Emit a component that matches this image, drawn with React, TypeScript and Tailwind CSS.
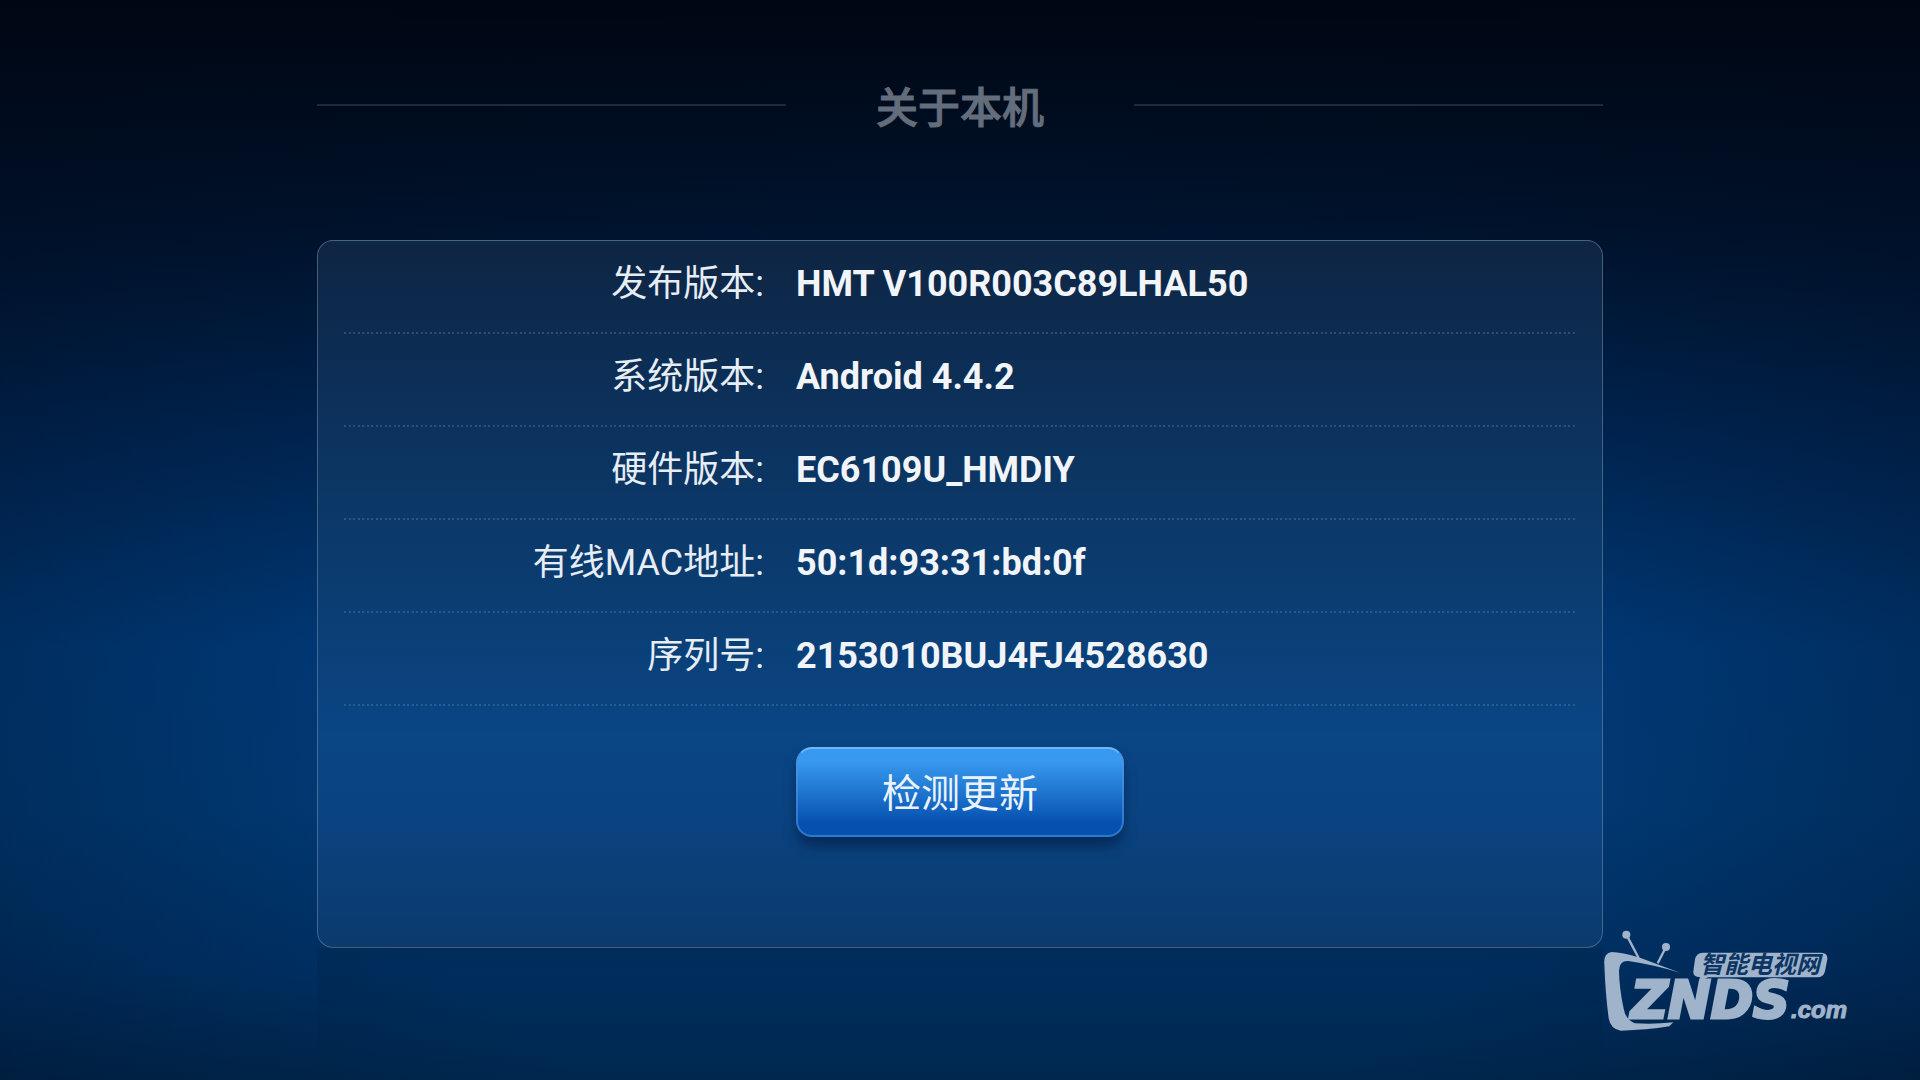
type InfoItem = {
  label: string;
  value: string;
};

const DEVICE_INFO: ReadonlyArray<InfoItem> = [
  { label: '发布版本', value: 'HMT V100R003C89LHAL50' },
  { label: '系统版本', value: 'Android 4.4.2' },
  { label: '硬件版本', value: 'EC6109U_HMDIY' },
  { label: '有线MAC地址', value: '50:1d:93:31:bd:0f' },
  { label: '序列号', value: '2153010BUJ4FJ4528630' },
];

interface InfoRowProps {
  readonly item: InfoItem;
}

function InfoRow({ item }: InfoRowProps) {
  return (
    <div className="flex h-[93px] flex-col">
      <div className="grid flex-1 grid-cols-[420px_1fr] items-baseline gap-x-8 pt-4 text-4xl">
        <dt className="text-right leading-[54px] text-[#e6edf5]">{item.label}:</dt>
        <dd className="leading-[54px] font-bold text-[#f1f4f8]">{item.value}</dd>
      </div>
      <div className="h-[2px] bg-[repeating-linear-gradient(to_right,#6f9cc44d_0_2px,transparent_2px_5px,#6f9cc44d_5px_7px,transparent_7px_9px)]" />
    </div>
  );
}

function PageTitle({ children }: { readonly children: string }) {
  return (
    <header className="flex items-center pt-[82px] pb-[104px]">
      <span className="mb-2 h-[2px] flex-1 bg-[#8fa6bf]/20" />
      <h1 className="w-[348px] text-center text-[42px] leading-[54px] font-medium text-[#636d7c] [-webkit-text-stroke:1px_#636d7c]">
        {children}
      </h1>
      <span className="mb-2 h-[2px] flex-1 bg-[#8fa6bf]/20" />
    </header>
  );
}

function SiteLogo() {
  return (
    <svg
      className="pointer-events-none absolute right-10 bottom-[30px] h-[140px] w-[300px]"
      viewBox="0 0 300 140"
      fill="#9fb3ca"
      role="img"
      aria-label="ZNDS.com"
    >
      {/* antennas and tv frame */}
      <g transform="scale(0.33333)">
        <g stroke="#9fb3ca" strokeWidth="7">
          <path d="M139 74 L176 144" />
          <path d="M258 111 L233 160" />
        </g>
        <circle cx="139" cy="74" r="12" />
        <circle cx="258" cy="111" r="12" />
        <path d="M300 188 L180 143 Q125 127 95 126 Q70 130 73 162 Q76 250 86 325 Q92 358 122 362 Q200 360 268 349 L280 337 Q220 344 165 340 Q136 328 131 296 Q118 235 117 182 Q118 151 145 153 Q220 164 300 188Z" />
        <path d="M368 128 H724 Q744 129 742 148 L735 184 Q731 202 712 202 H384 L362 214 L360 202 Q338 200 340 184 L345 148 Q349 129 368 128Z" />
      </g>
      <text x="120" y="63" className="fill-[#0c3564] font-['Noto_Sans_CJK_SC',sans-serif] text-[24px] font-bold italic">
        智能电视网
      </text>
      <text
        x="51"
        y="108"
        stroke="#9fb3ca"
        strokeWidth="3"
        className="font-['DejaVu_Sans',sans-serif] text-[51px] font-bold italic"
      >
        ZNDS
      </text>
      <text
        x="211"
        y="108"
        stroke="#9fb3ca"
        strokeWidth="1"
        className="font-['Liberation_Sans',sans-serif] text-[24px] font-bold italic"
      >
        .com
      </text>
    </svg>
  );
}

function App() {
  return (
    <div className="relative flex min-h-screen flex-col overflow-hidden bg-[linear-gradient(to_bottom,#000611_0%,#00132d_20%,#002552_40%,#003874_60%,#003972_75%,#003166_90%,#00284f_100%)] font-['Roboto','Noto_Sans_CJK_SC',sans-serif]">
      <div className="absolute inset-0 bg-[radial-gradient(ellipse_65%_85%_at_50%_64%,transparent_50%,#00081866_100%)]" />

      <main className="relative mx-auto flex w-full max-w-[1286px] flex-1 flex-col">
        <PageTitle>关于本机</PageTitle>

        <section className="rounded-2xl border border-[#7c93aa]/50 bg-[linear-gradient(to_bottom,#0e2543_0%,#0c3059_22%,#0b3c70_48%,#0a4584_70%,#0a4380_82%,#0b3a6d_100%)] pb-[110px]">
          <dl className="px-[26px]">
            {DEVICE_INFO.map((item) => (
              <InfoRow key={item.label} item={item} />
            ))}
          </dl>
          <div className="mt-[41px] flex justify-center">
            <button
              type="button"
              className="h-[90px] w-[328px] rounded-2xl border-2 border-[#4f93dc]/60 border-t-[#6db8fa] bg-linear-to-b from-[#3899f0] from-15% via-[#1f76cf] via-50% to-[#0650b0] to-85% bg-origin-border pt-1 text-[39px] text-[#eaf3fd] shadow-[0_10px_14px_-2px_#03214bcc]"
            >
              检测更新
            </button>
          </div>
        </section>

        {/* soft reflection under the panel */}
        <div className="flex-1 bg-linear-to-b from-[#00152c]/20 to-transparent" />
      </main>

      <SiteLogo />
    </div>
  );
}

export default App;
